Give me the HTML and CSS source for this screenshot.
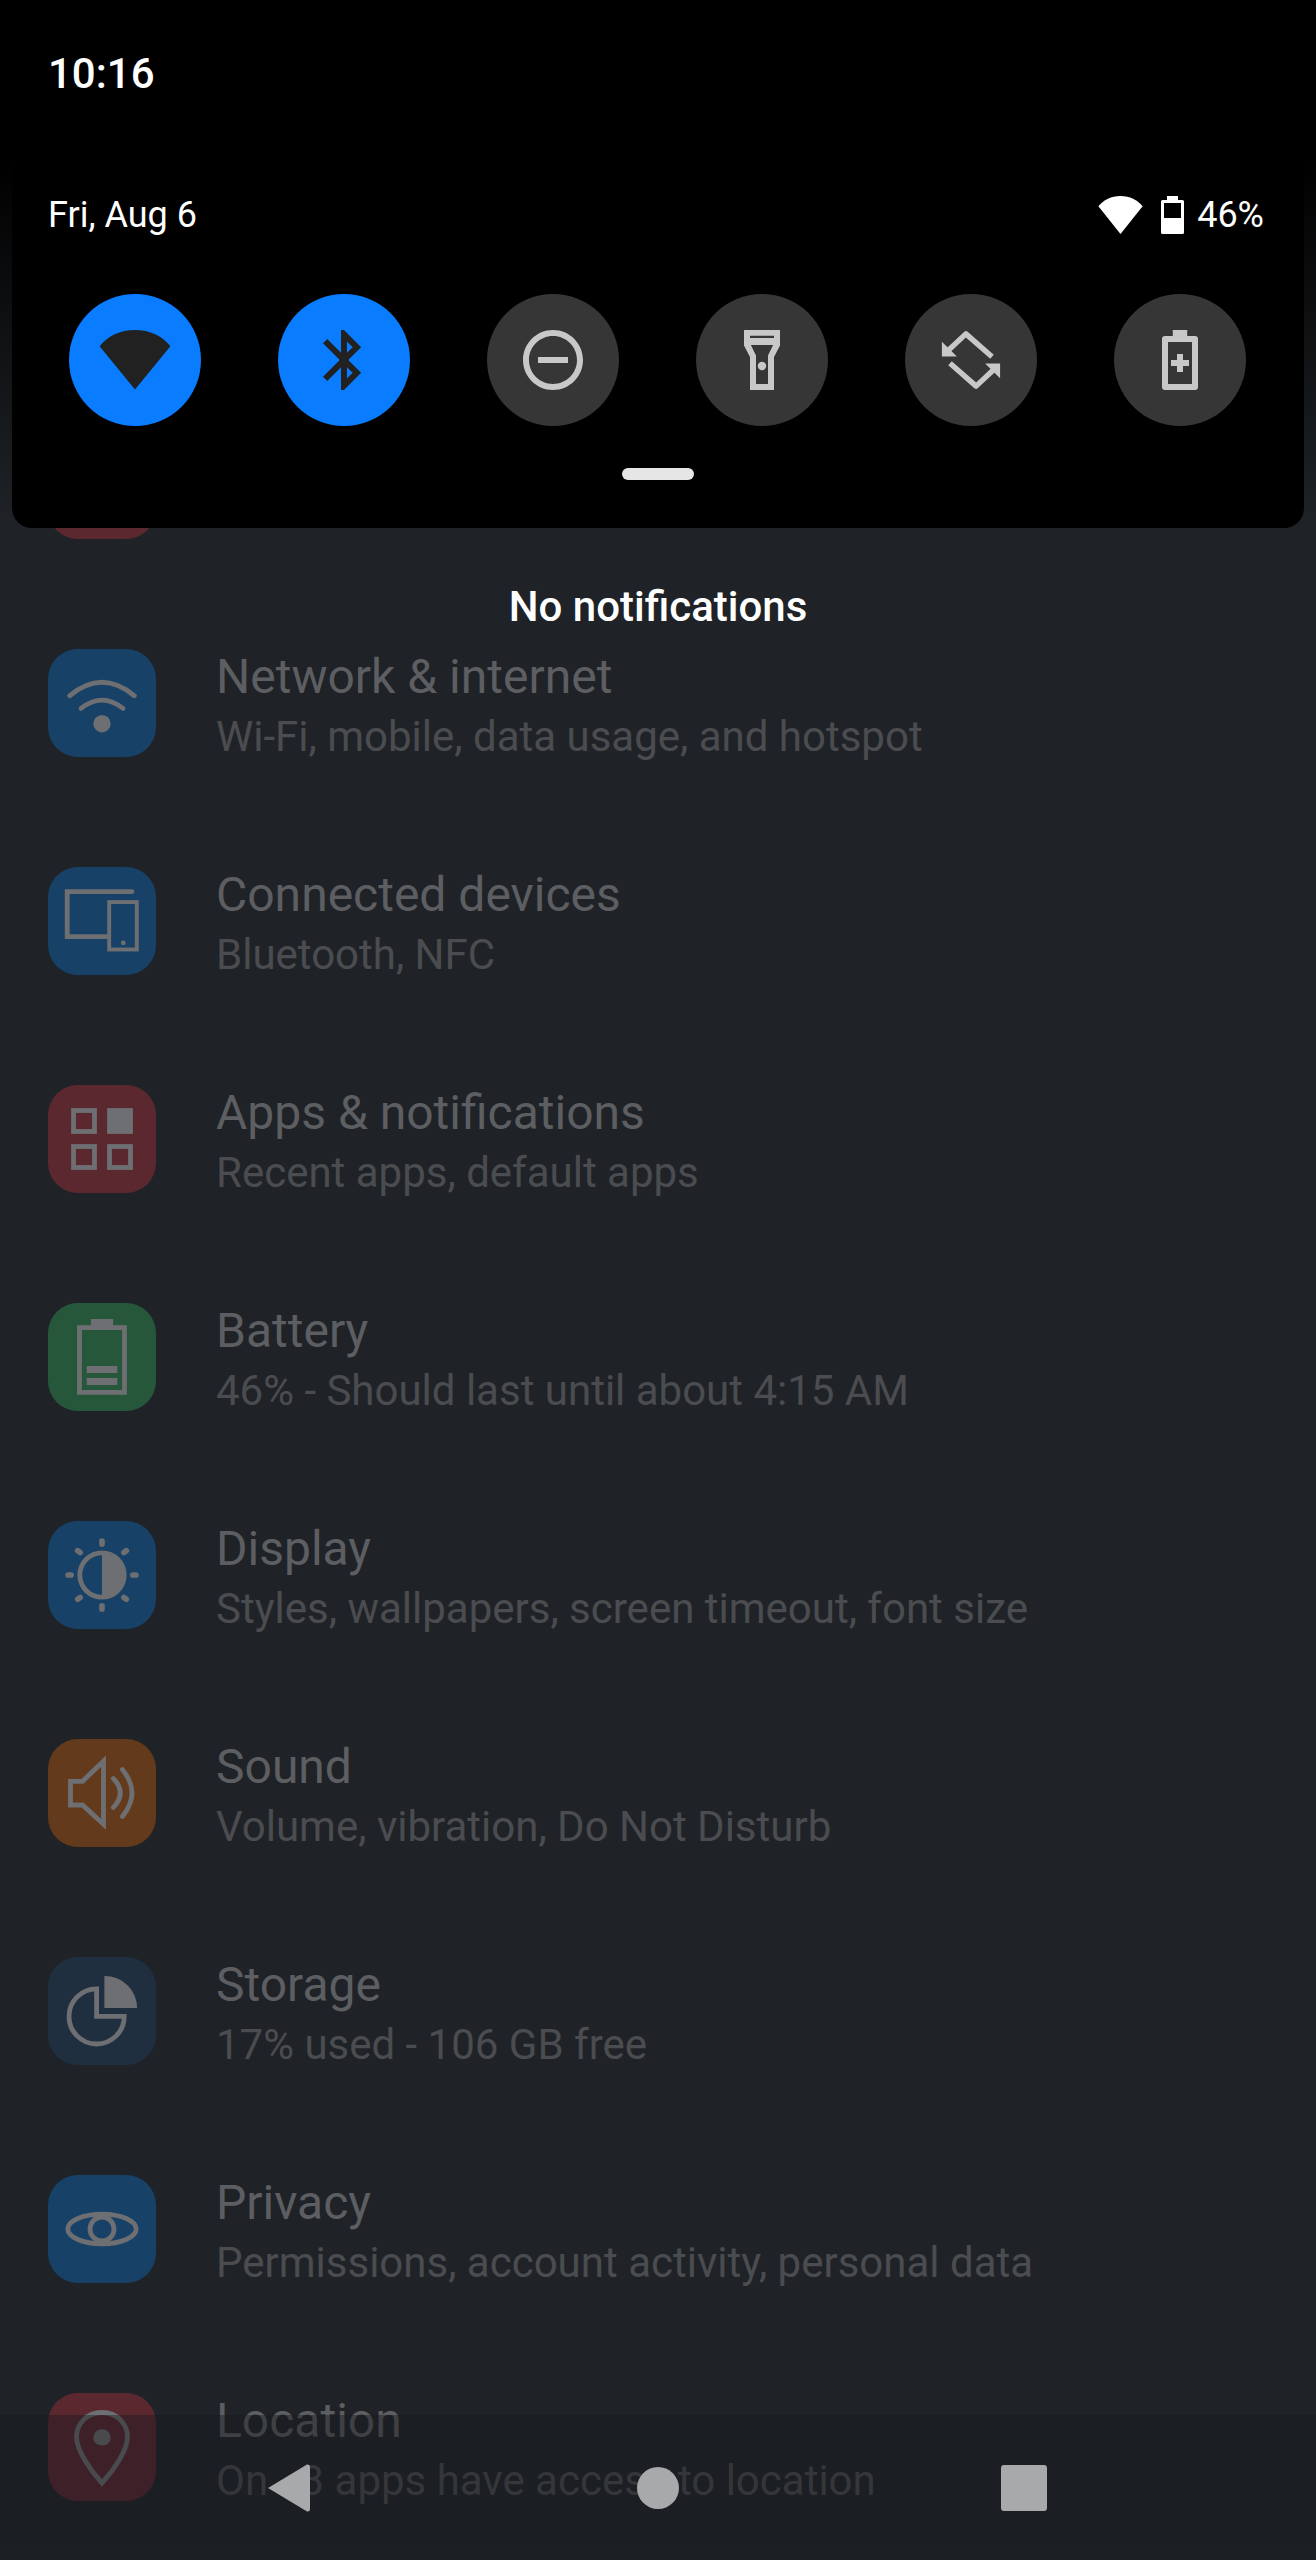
FILE: index.html
```html
<!DOCTYPE html>
<html lang="en">
<head>
  <meta charset="UTF-8" />
  <title>Settings</title>
  <meta name="viewport" content="width=device-width, initial-scale=1.0" />
  <link rel="stylesheet" href="styles.css">
</head>
<body>
  <!-- Settings list, dimmed behind the shade -->
  <div class="list">
    <div class="row">
      <div class="tile red"></div>
    </div>
    <div class="row">
      <div class="tile blue">
        <svg class="ico" viewBox="0 0 24 24"><path class="ln" d="M1.2 9.6Q12 .6 22.8 9.6"/><path class="ln" d="M5 13.8Q12 8.3 19 13.8"/><circle class="fl" cx="12" cy="18.9" r="2.9"/></svg>
      </div>
      <div class="text">
        <div class="title">Network &amp; internet</div>
        <div class="sub">Wi-Fi, mobile, data usage, and hotspot</div>
      </div>
    </div>
    <div class="row">
      <div class="tile blue">
        <svg class="ico" viewBox="0 0 24 24"><path class="ln" d="M22 2.2H.4V17.2H14"/><rect class="ln thin" x="14.4" y="5.7" width="9.2" height="15.8"/><circle class="fl" cx="19.1" cy="19.3" r=".8"/></svg>
      </div>
      <div class="text">
        <div class="title">Connected devices</div>
        <div class="sub">Bluetooth, NFC</div>
      </div>
    </div>
    <div class="row">
      <div class="tile red">
        <svg class="ico" viewBox="0 0 24 24"><rect class="ln" x="2.5" y="2.5" width="7" height="7"/><rect class="fl ln" x="14.5" y="2.5" width="7" height="7"/><rect class="ln" x="2.5" y="14.5" width="7" height="7"/><rect class="ln" x="14.5" y="14.5" width="7" height="7"/></svg>
      </div>
      <div class="text">
        <div class="title">Apps &amp; notifications</div>
        <div class="sub">Recent apps, default apps</div>
      </div>
    </div>
    <div class="row">
      <div class="tile green">
        <svg class="ico" viewBox="0 0 24 24"><rect class="ln" x="4.5" y="2.2" width="15" height="21.6"/><path class="fl" d="M8.3-.7H15.7V2H8.3ZM6.9 15H17.1V17.3H6.9ZM6.9 19H17.1V21.3H6.9Z"/></svg>
      </div>
      <div class="text">
        <div class="title">Battery</div>
        <div class="sub">46% - Should last until about 4:15 AM</div>
      </div>
    </div>
    <div class="row">
      <div class="tile blue">
        <svg class="ico" viewBox="0 0 24 24"><circle class="ln" cx="12" cy="12" r="7.4"/><path class="fl" d="M12 4.6a7.4 7.4 0 0 1 0 14.8Z"/><path class="ln rays" d="M12 .7V1.7M12 22.3V23.3M.7 12H1.7M22.3 12H23.3M3.9 3.9 4.7 4.5M20.1 3.9 19.3 4.5M3.9 20.1 4.7 19.5M20.1 20.1 19.3 19.5"/></svg>
      </div>
      <div class="text">
        <div class="title">Display</div>
        <div class="sub">Styles, wallpapers, screen timeout, font size</div>
      </div>
    </div>
    <div class="row">
      <div class="tile orange">
        <svg class="ico" viewBox="0 0 24 24"><path class="ln" d="M1.5 8.1H5.5L12.5 1.4V22.4L5.5 16H1.5Z"/><path class="ln" d="M15.8 7.2Q20.4 12 15.8 16.8"/><path class="ln" d="M18.8 4.2Q25.2 12 18.8 19.8"/></svg>
      </div>
      <div class="text">
        <div class="title">Sound</div>
        <div class="sub">Volume, vibration, Do Not Disturb</div>
      </div>
    </div>
    <div class="row">
      <div class="tile navy">
        <svg class="ico" viewBox="0 0 24 24"><path class="ln" d="M10.2 4.6A9.2 9.2 0 1 0 19.4 13.8H10.2Z"/><path class="fl" d="M12.8.3A10.9 10.7 0 0 1 23.7 11H12.8Z"/></svg>
      </div>
      <div class="text">
        <div class="title">Storage</div>
        <div class="sub">17% used - 106 GB free</div>
      </div>
    </div>
    <div class="row">
      <div class="tile blue">
        <svg class="ico" viewBox="0 0 24 24"><ellipse class="ln" cx="12" cy="12" rx="11.4" ry="4.95"/><circle class="ln" cx="12" cy="12" r="4"/></svg>
      </div>
      <div class="text">
        <div class="title">Privacy</div>
        <div class="sub">Permissions, account activity, personal data</div>
      </div>
    </div>
    <div class="row">
      <div class="tile red">
        <svg class="ico" viewBox="0 0 24 24"><path class="ln" d="M12 .5C6.9.5 3.5 4.3 3.5 8.7 3.5 13 8 19.7 12 24 16 19.7 20.5 13 20.5 8.7 20.5 4.3 17.1.5 12 .5Z"/><ellipse class="fl" cx="12" cy="8.8" rx="2.9" ry="2.7"/></svg>
      </div>
      <div class="text">
        <div class="title">Location</div>
        <div class="sub">On - 3 apps have access to location</div>
      </div>
    </div>
  </div>

  <div class="scrim"></div>

  <!-- Quick settings shade -->
  <div class="shade">
    <div class="clock">10:16</div>
    <div class="status">
      <div class="date">Fri, Aug 6</div>
      <div class="status-right">
        <svg class="st-wifi" viewBox="0 2 24 20" preserveAspectRatio="none"><path d="M.2 7.4C3 4 7 2 12 2 17 2 21 4 23.8 7.4L12 22Z"/></svg>
        <svg class="st-batt" viewBox="0 0 23 38"><path fill-rule="evenodd" d="M6 0H17V4H21.5A1.5 1.5 0 0 1 23 5.5V36.5A1.5 1.5 0 0 1 21.5 38H1.5A1.5 1.5 0 0 1 0 36.5V5.5A1.5 1.5 0 0 1 1.5 4H6ZM3 7V22H20V7Z"/></svg>
        <span class="pct">46%</span>
      </div>
    </div>
    <div class="tiles">
      <div class="qs on">
        <svg viewBox="0 0 24 24"><path d="M.2 7.4C3 4 7 2 12 2 17 2 21 4 23.8 7.4L12 21.8Z"/></svg>
      </div>
      <div class="qs on">
        <svg viewBox="0 0 24 24"><path d="M17.71 7.71 12 2H11V9.59L6.41 5 5 6.41 10.59 12 5 17.59 6.41 19 11 14.41V22H12L17.71 16.29 13.41 12ZM13 5.83 14.88 7.71 13 9.59ZM14.88 16.29 13 18.17V14.41Z"/></svg>
      </div>
      <div class="qs">
        <svg viewBox="0 0 24 24"><path d="M12 2C6.48 2 2 6.48 2 12S6.48 22 12 22 22 17.52 22 12 17.52 2 12 2ZM12 20C7.59 20 4 16.41 4 12S7.59 4 12 4 20 7.59 20 12 16.41 20 12 20ZM7 11V13H17V11Z"/></svg>
      </div>
      <div class="qs">
        <svg viewBox="0 0 24 24"><path fill-rule="evenodd" d="M6 2V7.2L8 11V22H16V11L18 7.2V2ZM8 3.9H16V4.7H8ZM8.3 7H15.7L14 10.5V20H10V10.5ZM12 12.6A1.4 1.4 0 1 0 12 15.4 1.4 1.4 0 0 0 12 12.6Z"/></svg>
      </div>
      <div class="qs">
        <svg viewBox="0 0 24 24"><path class="rot" d="M19 10.9 10.3 3.3 4.2 9"/><path class="rot" d="M5 13.1 13.7 20.7 19.8 15"/><path d="M2.3 5.9V10.8H7.3ZM21.7 18.1V13.2H16.7Z"/></svg>
      </div>
      <div class="qs">
        <svg viewBox="0 0 24 24"><path fill-rule="evenodd" d="M9.6 2H14.4V4H17A1 1 0 0 1 18 5V21A1 1 0 0 1 17 22H7A1 1 0 0 1 6 21V5A1 1 0 0 1 7 4H9.6ZM8 6V20H16V6ZM11 10H13V12H15V14H13V16H11V14H9V12H11Z"/></svg>
      </div>
    </div>
    <div class="handle"></div>
  </div>

  <div class="empty">No notifications</div>

  <!-- Nav bar sits on top of the list -->
  <div class="navbar">
    <svg class="back" viewBox="0 0 42 48"><path d="M0 24 39 .6Q42 0 42 3V45Q42 48 39 47.4Z"/></svg>
    <div class="home"></div>
    <div class="recent"></div>
  </div>
</body>
</html>
```
FILE: styles.css
```css
:root {
  --bg: #1f2327;
  --title: #5c5e61;
  --sub: #4a4c4f;
  --glyph: #6d6f72;
}
* {
  box-sizing: border-box;
}
body {
  margin: 0;
  width: 1316px;
  height: 2560px;
  position: relative;
  overflow: hidden;
  background: var(--bg);
  font-family: Roboto, sans-serif;
}

/* list */
.list {
  display: flex;
  flex-direction: column;
  gap: 110px;
  padding: 431px 0 0 48px;
}
.row {
  display: flex;
  align-items: center;
  gap: 60px;
  height: 108px;
}
.tile {
  width: 108px;
  height: 108px;
  flex: none;
  border-radius: 30px;
  display: flex;
  align-items: center;
  justify-content: center;
}
.blue { background: #174166; }
.red { background: #5c2830; }
.green { background: #27573a; }
.orange { background: #633a1b; }
.navy { background: #1f2f40; }
.ico {
  width: 72px;
  height: 72px;
  overflow: visible;
}
.ln {
  fill: none;
  stroke: var(--glyph);
  stroke-width: 1.6;
  stroke-linecap: round;
}
.ln.thin { stroke-width: 1.3; }
.ln.rays { stroke-width: 1.9; }
.fl { fill: var(--glyph); }
.text {
  padding-top: 4px;
}
.title {
  font-size: 48px;
  line-height: 56px;
  color: var(--title);
}
.sub {
  font-size: 42px;
  line-height: 50px;
  margin-top: 7px;
  color: var(--sub);
}

/* shade */
.scrim {
  position: absolute;
  top: 0;
  left: 0;
  right: 0;
  height: 528px;
  background: linear-gradient(#000 30%, transparent);
}
.shade {
  position: absolute;
  top: 0;
  left: 12px;
  width: 1292px;
  height: 528px;
  background: #000;
  border-radius: 0 0 20px 20px;
  color: #fff;
  display: flex;
  flex-direction: column;
}
.clock {
  font-size: 42px;
  font-weight: 500;
  line-height: 48px;
  margin: 50px 0 0 36px;
}
.status {
  display: flex;
  justify-content: space-between;
  align-items: center;
  margin-top: 93px;
  padding: 0 40px 0 36px;
  height: 48px;
}
.date {
  font-size: 36px;
}
.status-right {
  display: flex;
  align-items: center;
}
.st-wifi {
  width: 45px;
  height: 38px;
  fill: #fff;
}
.st-batt {
  width: 23px;
  height: 38px;
  margin-left: 18px;
  fill: #fff;
}
.pct {
  font-size: 36px;
  margin-left: 13px;
}
.tiles {
  display: flex;
  justify-content: space-between;
  padding: 0 58px 0 57px;
  margin-top: 55px;
}
.qs {
  width: 132px;
  height: 132px;
  border-radius: 50%;
  background: #363636;
  fill: #c8c8c8;
  display: flex;
  align-items: center;
  justify-content: center;
}
.qs.on {
  background: #0a7cff;
  fill: #212121;
}
.qs svg {
  width: 72px;
  height: 72px;
  overflow: visible;
}
.rot {
  fill: none;
  stroke: #c8c8c8;
  stroke-width: 1.8;
  stroke-linejoin: round;
}
.handle {
  width: 72px;
  height: 12px;
  border-radius: 6px;
  background: #e6e6e6;
  margin: 42px auto 0;
}
.empty {
  position: absolute;
  top: 583px;
  left: 0;
  right: 0;
  text-align: center;
  font-size: 42px;
  line-height: 48px;
  font-weight: 500;
  color: #fff;
}

/* nav bar */
.navbar {
  position: absolute;
  top: 2415px;
  left: 0;
  right: 0;
  bottom: 0;
  background: rgba(24, 25, 29, 0.43);
  display: flex;
  align-items: center;
  padding-left: 268px;
}
.back {
  width: 42px;
  height: 48px;
  fill: #a8a9ab;
}
.home {
  width: 42px;
  height: 42px;
  margin-left: 327px;
  border-radius: 50%;
  background: #a8a9ab;
}
.recent {
  width: 46px;
  height: 46px;
  margin-left: 322px;
  border-radius: 3px;
  background: #a8a9ab;
}
```
